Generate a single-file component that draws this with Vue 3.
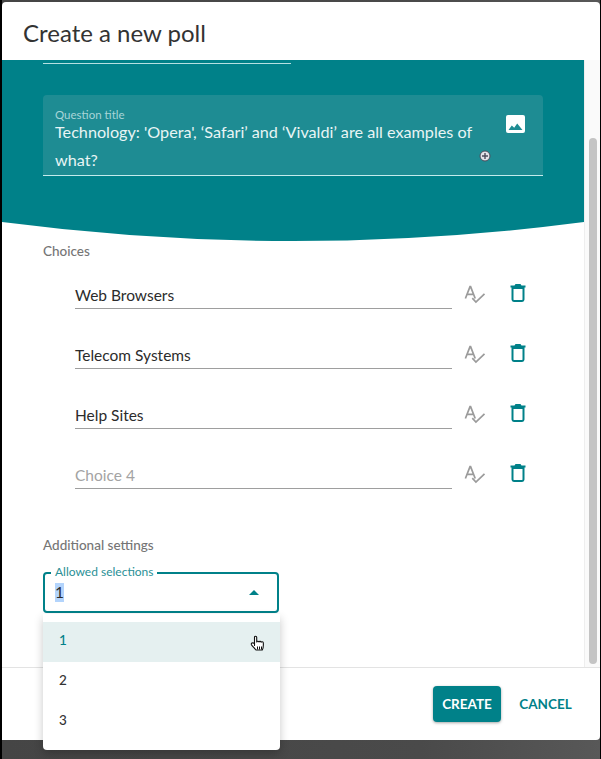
<template>
  <div class="page">
    <div class="dialog">
      <header class="dialog-title">Create a new poll</header>

      <div class="dialog-middle">
        <div class="dialog-body">
          <section class="hero">
            <div class="cut-line"></div>
            <div class="question">
              <div class="question-text">
                <label>Question title</label>
                <p>Technology: 'Opera', ‘Safari’ and ‘Vivaldi’ are all examples of what?</p>
              </div>
              <svg class="image-icon" viewBox="0 0 19 18" width="19" height="18">
                <rect width="19" height="18" rx="2" fill="#fff" />
                <path fill="#1e8c93" d="M2.500 15l3.300-4.500 2.400 2.300 3-4.300 5.300 6.500z" />
              </svg>
              <svg class="add-icon" viewBox="0 0 12 12" width="12" height="12">
                <circle cx="6" cy="6" r="5" fill="#e4e4ea" stroke="#4d4d5c" stroke-width="1" />
                <path d="M6 3v6M3 6h6" stroke="#4d4d5c" stroke-width="1.400" />
              </svg>
            </div>
          </section>
          <svg class="curve" viewBox="0 0 582 19" preserveAspectRatio="none">
            <path fill="#008189" d="M0 0H582Q291 38 0 0Z" />
          </svg>

          <section class="content">
            <h3 class="section-title">Choices</h3>
            <div class="choices">
              <div v-for="choice in choices" :key="choice.placeholder" class="choice">
                <div class="choice-input" :class="{ empty: !choice.text }">
                  {{ choice.text || choice.placeholder }}
                </div>
                <svg class="check-icon" viewBox="0 0 22 20" width="22" height="20">
                  <path fill="none" stroke="#9b9b9b" stroke-width="1.700" d="M1.400 13.500 6 1.600h.6l4.600 11.900M3 9.400h7" />
                  <path fill="none" stroke="#9b9b9b" stroke-width="1.700" d="M8.300 13.200l3.600 3.800 8.600-8.200" />
                </svg>
                <svg class="trash-icon" viewBox="0 0 16 19" width="16" height="19">
                  <path fill="none" stroke="#008189" stroke-width="2" d="M2.500 5h11v11.600a1.400 1.400 0 0 1-1.400 1.400H3.900a1.400 1.400 0 0 1-1.400-1.400z" />
                  <path fill="#008189" d="M0.500 2.500h4l1-1.500h5l1 1.500h4v2h-15z" />
                </svg>
              </div>
            </div>

            <h3 class="section-title settings-title">Additional settings</h3>
            <div class="select">
              <span class="select-label">Allowed selections</span>
              <span class="select-value">1</span>
              <span class="select-arrow"></span>
              <ul class="menu">
                <li v-for="n in 3" :key="n" :class="{ active: n === 1 }">
                  {{ n }}
                  <svg v-if="n === 1" class="cursor" viewBox="0 0 16 19" width="16" height="19">
                    <path fill="#fff" stroke="#111" stroke-width="1.100" stroke-linejoin="round" d="M4.500 10.500V2.300c0-1.500 2.200-1.500 2.200 0V7c.3-1 2-1 2.200 0 .4-.9 2-.8 2.200.2.500-.7 2.100-.5 2.200.6.200 2.500.2 5-1 7.200H6c-1-1.500-3-3.200-4.500-5.200-.9-1.300.9-2.800 3-1.300z" />
                    <path stroke="#111" stroke-width="1" d="M7.500 11.500v3M9.500 11.500v3M11.500 11.500v3" />
                  </svg>
                </li>
              </ul>
            </div>
          </section>
        </div>

        <div class="scrollbar"><div class="thumb"></div></div>
      </div>

      <footer class="dialog-actions">
        <button class="btn-create">CREATE</button>
        <button class="btn-cancel">CANCEL</button>
      </footer>
    </div>
  </div>
</template>

<script setup>
const choices = [
  { text: 'Web Browsers', placeholder: 'Choice 1' },
  { text: 'Telecom Systems', placeholder: 'Choice 2' },
  { text: 'Help Sites', placeholder: 'Choice 3' },
  { text: '', placeholder: 'Choice 4' },
];
</script>

<style>
html, body { margin: 0; background: #444; }
</style>

<style scoped>
.page {
  width: 601px;
  height: 759px;
  overflow: hidden;
  box-sizing: border-box;
  padding: 2px 1px 0 2px;
  background: linear-gradient(90deg, #454545 0, #4a4a4a 70%, #585858 100%);
  box-shadow: inset 2px 0 0 #000, inset -1px 0 0 #000;
  font-family: Lato, "Open Sans", sans-serif;
  color: #2b2b2b;
}

.dialog {
  height: 738px;
  display: flex;
  flex-direction: column;
  background: #fff;
  border-radius: 4px 4px 4px 0;
}

.dialog-title {
  height: 58px;
  flex: none;
  box-sizing: border-box;
  padding: 16px 21px 0;
  font-size: 24px;
  line-height: 30px;
  color: #333;
}

.dialog-middle {
  height: 607px;
  flex: none;
  display: flex;
}

.dialog-body {
  flex: 1;
  min-width: 0;
}

.scrollbar {
  width: 16px;
  flex: none;
  box-sizing: border-box;
  padding: 78px 3px 3px 4px;
  background: #fafafa;
  border-left: 1px solid #eee;
}

.thumb {
  height: 100%;
  background: #c4c4c4;
  border-radius: 4px;
}

.hero {
  height: 162px;
  box-sizing: border-box;
  padding: 3px 41px 0 41px;
  background: #008189;
}

.cut-line {
  width: 248px;
  height: 1px;
  background: #b5e0e2;
}

.question {
  position: relative;
  margin-top: 31px;
  height: 81px;
  box-sizing: border-box;
  padding: 13px 12px 0;
  display: flex;
  background: #1e8c93;
  border-radius: 4px 4px 0 0;
  border-bottom: 1px solid #c4ebec;
  color: #e8f5f5;
}

.question-text {
  width: 430px;
  flex: none;
}

.question-text label {
  display: block;
  font-size: 11.500px;
  line-height: 13px;
  color: #a8d5d8;
}

.question-text p {
  margin: -3px 0 0;
  font-size: 16.200px;
  line-height: 28px;
}

.image-icon {
  flex: none;
  margin: 7px 0 0 21px;
}

.add-icon {
  position: absolute;
  left: 436px;
  top: 55px;
}

.curve {
  display: block;
  width: 100%;
  height: 19px;
}

.content {
  padding: 2px 0 0 41px;
}

.section-title {
  margin: 0;
  font-size: 13.500px;
  line-height: 16px;
  font-weight: 500;
  color: #757575;
}

.choices {
  margin-top: 8px;
}

.choice {
  height: 60px;
  display: flex;
  align-items: flex-start;
}

.choice-input {
  width: 377px;
  height: 26px;
  box-sizing: border-box;
  margin: 16px 0 0 32px;
  padding-top: 2px;
  font-size: 15.500px;
  line-height: 21px;
  border-bottom: 1px solid #9e9e9e;
}

.choice-input.empty {
  color: #a3a3a3;
}

.check-icon {
  margin: 18px 0 0 12px;
  flex: none;
}

.trash-icon {
  margin: 16px 0 0 24px;
  flex: none;
}

.settings-title {
  margin-top: 30px;
}

.select {
  position: relative;
  width: 236px;
  height: 41px;
  margin-top: 19px;
  box-sizing: border-box;
  border: 2px solid #008189;
  border-radius: 4px;
}

.select-label {
  position: absolute;
  left: 6px;
  top: -9px;
  padding: 0 4px;
  background: #fff;
  font-size: 12px;
  line-height: 14px;
  color: #2a9096;
}

.select-value {
  position: absolute;
  left: 10px;
  top: 9px;
  font-size: 15.500px;
  line-height: 19px;
  background: #b3d4fc;
}

.select-arrow {
  position: absolute;
  right: 18px;
  top: 16px;
  width: 0;
  height: 0;
  border-left: 5px solid transparent;
  border-right: 5px solid transparent;
  border-bottom: 5px solid #008189;
}

.menu {
  position: absolute;
  z-index: 2;
  left: -2px;
  top: 40px;
  width: 237px;
  margin: 0;
  padding: 8px 0;
  list-style: none;
  background: #fff;
  border-radius: 0 0 4px 4px;
  box-shadow: 0 4px 10px rgba(0, 0, 0, 0.22);
}

.menu li {
  position: relative;
  height: 40px;
  padding-left: 16px;
  font-size: 13.500px;
  font-weight: 500;
  line-height: 37px;
  color: #333;
}

.menu li.active {
  background: #e5f0f0;
  color: #008189;
}

.cursor {
  position: absolute;
  left: 207px;
  top: 13px;
}

.dialog-actions {
  flex: 1;
  display: flex;
  align-items: flex-start;
  box-sizing: border-box;
  padding: 18px 0 0 431px;
  border-top: 1px solid #e3e3e3;
}

.btn-create,
.btn-cancel {
  font-family: inherit;
  font-size: 13.500px;
  font-weight: 700;
  border: 0;
  padding: 0;
  height: 36px;
}

.btn-create {
  width: 68px;
  background: #008189;
  color: #fff;
  border-radius: 4px;
  box-shadow: 0 1px 3px rgba(0, 0, 0, 0.35);
}

.btn-cancel {
  width: 53px;
  margin-left: 18px;
  background: none;
  color: #008189;
}
</style>
